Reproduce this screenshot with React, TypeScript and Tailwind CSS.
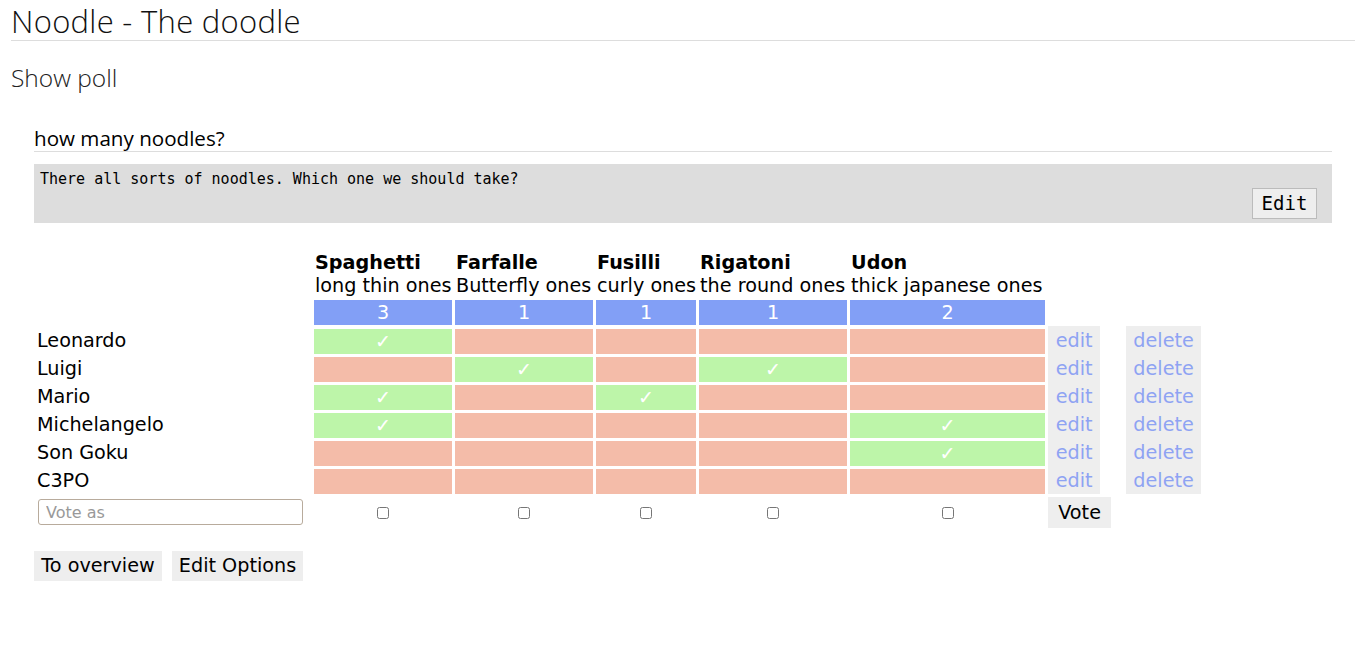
import React from "react";

const options = [
  { name: "Spaghetti", desc: "long thin ones", count: 3, w: "w-[138px]" },
  { name: "Farfalle", desc: "Butterfly ones", count: 1, w: "w-[138px]" },
  { name: "Fusilli", desc: "curly ones", count: 1, w: "w-[100px]" },
  { name: "Rigatoni", desc: "the round ones", count: 1, w: "w-[148px]" },
  { name: "Udon", desc: "thick japanese ones", count: 2, w: "w-[195px]" },
];

const votes: [string, boolean[]][] = [
  ["Leonardo", [true, false, false, false, false]],
  ["Luigi", [false, true, false, true, false]],
  ["Mario", [true, false, true, false, false]],
  ["Michelangelo", [true, false, false, false, true]],
  ["Son Goku", [false, false, false, false, true]],
  ["C3PO", [false, false, false, false, false]],
];

export default function App() {
  return (
    <div className="bg-white text-black min-h-[672px]" style={{ fontFamily: '"DejaVu Sans", sans-serif' }}>
      <h1
        className="mx-[11px] h-[41px] leading-[42px] text-[31px] font-light text-[#111] border-b border-[#dddddd] tracking-[0.3px]"
        style={{ fontFamily: '"Open Sans", sans-serif' }}
      >
        Noodle - The doodle
      </h1>
      <h2
        className="mx-[11px] mt-[21px] text-[24.5px] leading-[32px] font-light text-[#222]"
        style={{ fontFamily: '"Open Sans", sans-serif' }}
      >
        Show poll
      </h2>
      <div className="mx-[34px] mt-[31px]">
        <h3
          className="text-[20.6px] leading-[26px] pb-0 border-b border-[#dddddd]"
          style={{ fontFamily: '"Open Sans", sans-serif' }}
        >
          how many noodles?
        </h3>
        <div className="mt-[12px] bg-[#dddddd] h-[59px] flex flex-col">
          <pre className="pl-[6px] pt-[6px] text-[15px] leading-[18px]" style={{ fontFamily: '"DejaVu Sans Mono", monospace' }}>
            There all sorts of noodles. Which one we should take?
          </pre>
          <div className="flex justify-end pr-[15px] mt-auto pb-[4px]">
            <button
              className="w-[65px] h-[31px] bg-[#eeeeee] border border-[#bbbbbb] text-[19px] leading-none"
              style={{ fontFamily: '"DejaVu Sans Mono", monospace' }}
            >
              Edit
            </button>
          </div>
        </div>

        <table className="mt-[28px] border-separate border-spacing-x-[3px] border-spacing-y-0 text-[19.2px] leading-[23px]">
          <thead>
            <tr>
              <th className="w-[274px] min-w-[274px]"></th>
              {options.map((o) => (
                <th key={o.name} className={`${o.w} text-left align-bottom pl-[1px] pb-[3px] whitespace-nowrap`}>
                  <div className="font-bold">{o.name}</div>
                  <div className="font-normal">{o.desc}</div>
                </th>
              ))}
              <th className="w-[52px] min-w-[52px]"></th>
              <th className="w-[20px] min-w-[20px]"></th>
              <th className="w-[75px] min-w-[75px]"></th>
            </tr>
            <tr>
              <th></th>
              {options.map((o) => (
                <th key={o.name} className="p-0 pb-[1px]">
                  <div className="bg-[#829ff6] h-[25px] leading-[25px] text-white font-normal text-center">{o.count}</div>
                </th>
              ))}
              <th></th>
              <th></th>
              <th></th>
            </tr>
          </thead>
          <tbody>
            {votes.map(([name, v]) => (
              <tr key={name}>
                <td className="h-[28px] p-0 pt-[2px] leading-[26px] whitespace-nowrap">{name}</td>
                {v.map((yes, i) => (
                  <td key={i} className="h-[28px] p-0 pt-[3px]">
                    <div
                      className={`h-[25px] leading-[25px] text-center text-white ${yes ? "bg-[#bdf5a9]" : "bg-[#f4bca9]"}`}
                    >
                      {yes ? "✓" : ""}
                    </div>
                  </td>
                ))}
                <td className="h-[28px] p-0 pt-[2px] bg-[#eeeeee] text-center text-[#8ea3f3] leading-[26px]">edit</td>
                <td></td>
                <td className="h-[28px] p-0 pt-[2px] bg-[#eeeeee] text-center text-[#8ea3f3] leading-[26px]">delete</td>
              </tr>
            ))}
            <tr>
              <td className="p-0 pt-[5px] pl-[1px] pr-[8px] align-top">
                <input
                  placeholder="Vote as"
                  className="w-full h-[26px] border border-[#b8ab9c] rounded-[3px] px-[7px] text-[16px] placeholder:text-[#999999] outline-none block"
                  style={{ fontFamily: '"DejaVu Sans", sans-serif' }}
                />
              </td>
              {options.map((o) => (
                <td key={o.name} className="p-0 pt-[3px] text-center align-top">
                  <div className="h-[31px] flex items-center justify-center">
                    <input type="checkbox" className="w-[12px] h-[12px] block" />
                  </div>
                </td>
              ))}
              <td className="pt-[3px] p-0 align-top" colSpan={2}>
                <button className="w-[63px] h-[31px] bg-[#eeeeee] text-[19.2px] block">Vote</button>
              </td>
              <td></td>
            </tr>
          </tbody>
        </table>

        <div className="mt-[23px] flex gap-[10px]">
          <button className="w-[128px] h-[30px] bg-[#eeeeee] text-[19.2px]">To overview</button>
          <button className="w-[131px] h-[30px] bg-[#eeeeee] text-[19.2px]">Edit Options</button>
        </div>
      </div>
    </div>
  );
}
